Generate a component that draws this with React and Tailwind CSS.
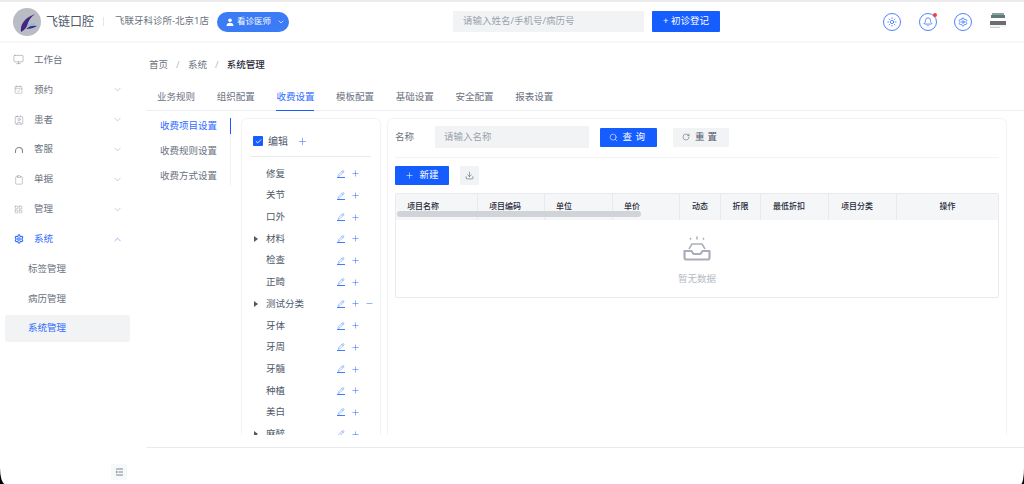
import { ChevronDown, ChevronUp, Plus, Minus, Search, RotateCw, Download, Check, Pencil, Sun, Bell, Settings, Monitor, CalendarCheck, Contact, Clipboard, LayoutGrid } from 'lucide-react';

// headset arc, lucide's one has ear cups the picture doesn't show
function HeadsetArc(props) {
  return (
    <svg width="10" height="10" viewBox="0 0 10 10" fill="none" stroke="currentColor" strokeWidth="1" {...props}>
      <path d="M1.500 8V6a3.500 3.500 0 0 1 7 0v2" />
    </svg>
  );
}

const menu = [
  { label: '工作台', icon: Monitor, size: 11 },
  { label: '预约', icon: CalendarCheck, size: 9, arrow: true },
  { label: '患者', icon: Contact, size: 10, arrow: true },
  { label: '客服', icon: HeadsetArc, size: 10, arrow: true },
  { label: '单据', icon: Clipboard, size: 10, arrow: true },
  { label: '管理', icon: LayoutGrid, size: 9, arrow: true },
];

const tabs = ['业务规则', '组织配置', '收费设置', '模板配置', '基础设置', '安全配置', '报表设置'];

const tree = [
  { name: '修复' },
  { name: '关节' },
  { name: '口外' },
  { name: '材料', caret: true },
  { name: '检查' },
  { name: '正畸' },
  { name: '测试分类', caret: true, minus: true },
  { name: '牙体' },
  { name: '牙周' },
  { name: '牙髓' },
  { name: '种植' },
  { name: '美白' },
  { name: '麻醉', caret: true },
];

const columns = [
  { label: '项目名称', w: 'w-[82px]', cls: 'pl-[11px]' },
  { label: '项目编码', w: 'w-[67px]', cls: 'pl-[11px]' },
  { label: '单位', w: 'w-[68px]', cls: 'pl-[11px]' },
  { label: '单价', w: 'w-[67px]', cls: 'pl-[11px]' },
  { label: '动态', w: 'w-[41px]', cls: 'justify-center' },
  { label: '折限', w: 'w-[40px]', cls: 'justify-center' },
  { label: '最低折扣', w: 'w-[68px]', cls: 'pl-[12px]' },
  { label: '项目分类', w: 'w-[68px]', cls: 'pl-[12px]' },
  { label: '操作', w: 'flex-1', cls: 'justify-center' },
];

function CircleIcon({ icon: Icon, dot }) {
  return (
    <div className="relative flex h-[18px] w-[18px] items-center justify-center rounded-full border border-[#4f82ff] text-[#2f6bff]">
      <Icon size={10} strokeWidth={1.8} />
      {dot && <span className="absolute -right-[1px] -top-[1px] h-[4px] w-[4px] rounded-full bg-[#f53f3f]" />}
    </div>
  );
}

function Logo() {
  return (
    <svg width="28" height="28" viewBox="0 0 28 28">
      <circle cx="14" cy="14" r="14" fill="#b9bcc4" />
      <path d="M8 24c-1-7 3-14 14-18-4 3-6 6-7 9-1 4-3 7-7 9z" fill="#43287f" />
      <path d="M13 21c3-3 7-4 11-3-3 2-7 3-11 3z" fill="#43287f" />
      <path d="M14 18c2-2 5-3 9-3-2 2-5 3-9 3z" fill="#7cc0e0" />
    </svg>
  );
}

function Avatar() {
  return (
    <div className="flex h-[18px] w-[16px] flex-col">
      <div className="mx-[2px] h-[2px] bg-[#8aa09e]" />
      <div className="mx-[1px] h-[3px] bg-[#5f7b78]" />
      <div className="h-[3px] bg-white" />
      <div className="h-[4px] bg-[#6a6e73]" />
      <div className="h-[2px] bg-[#f3f4f4]" />
      <div className="mr-[6px] h-[1px] bg-[#c9ccd0]" />
    </div>
  );
}

function TreeRow({ item }) {
  return (
    <div className="flex h-[21.7px] shrink-0 items-center text-[9.5px] text-[#4e5969]">
      <span className="flex w-[14px] shrink-0 justify-center">
        {item.caret && <span className="h-0 w-0 border-y-[3px] border-l-[4px] border-y-transparent border-l-[#4e5969]" />}
      </span>
      <span className="ml-[3px] w-[71px] shrink-0">{item.name}</span>
      <span className="flex shrink-0 items-center gap-[5.5px] text-[#3f7bff]">
        <Pencil size={8} strokeWidth={1.6} className="border-b border-[#3f7bff]" />
        <Plus size={9} strokeWidth={1.6} />
        {item.minus && <Minus size={9} strokeWidth={1.5} />}
      </span>
    </div>
  );
}

export default function App() {
  return (
    <div className="h-[484px] w-[1024px] overflow-hidden bg-black">
      <div
        className="flex h-[484px] w-[1024px] flex-col overflow-hidden rounded-bl-[5px_16px] rounded-br-[3px_16px] bg-white"
        style={{ fontFamily: '"Noto Sans", "Noto Sans CJK SC", sans-serif' }}
      >
        <header className="flex h-[43px] shrink-0 items-center border-y-2 border-t-[#ebebeb] border-b-[#f7f7f8] pl-[13px]">
          <Logo />
          <span className="ml-[5px] text-[12px] text-[#4e5969]">飞链口腔</span>
          <span className="ml-[9px] h-[9px] w-px bg-[#e5e6eb]" />
          <span className="ml-[11px] w-[93px] shrink-0 whitespace-nowrap text-[9.5px] text-[#6b7280]">飞联牙科诊所-北京1店</span>
          <button className="ml-[9px] flex h-[20px] w-[72px] shrink-0 items-center rounded-full bg-[#3b7cf6] pl-[9px] text-[8.5px] text-white">
            <svg width="8" height="8" viewBox="0 0 8 8" fill="currentColor">
              <circle cx="4" cy="2.200" r="1.800" />
              <path d="M0.500 8c0-2.500 1.500-3.200 3.500-3.200S7.500 5.500 7.500 8z" />
            </svg>
            <span className="ml-[3px]">看诊医师</span>
            <ChevronDown size={8} className="ml-[6px]" />
          </button>
          <div className="ml-[164px] flex h-[21px] w-[191px] shrink-0 items-center rounded-[1px] bg-[#f2f3f5] pl-[10px] text-[9.5px] text-[#9ca3af]">
            请输入姓名/手机号/病历号
          </div>
          <button className="ml-[8px] flex h-[21px] w-[68px] shrink-0 items-center justify-center rounded-[1px] bg-[#165dff] text-[9.5px] text-white">
            + 初诊登记
          </button>
          <div className="ml-[163px] flex items-center gap-[17.5px]">
            <CircleIcon icon={Sun} />
            <CircleIcon icon={Bell} dot />
            <CircleIcon icon={Settings} />
          </div>
          <div className="ml-[18px]">
            <Avatar />
          </div>
        </header>

        <div className="flex min-h-0 flex-1">
          <aside className="flex w-[146px] shrink-0 flex-col pl-[5px] pt-[2px]">
            {menu.map((m) => (
              <div key={m.label} className="flex h-[29.9px] w-[125px] shrink-0 items-center text-[9.5px] text-[#6b7280]">
                <span className="flex w-[19px] shrink-0 justify-end">
                  <span className="flex w-[11px] justify-center text-[#7f8794]">
                    <m.icon size={m.size} strokeWidth={1.1} />
                  </span>
                </span>
                <span className="ml-[10px]">{m.label}</span>
                {m.arrow && <ChevronDown size={11} strokeWidth={1} className="ml-auto mr-[7px] text-[#8f96a3]" />}
              </div>
            ))}
            <div className="flex h-[29.9px] w-[125px] shrink-0 items-center pl-[8px] text-[9.5px] text-[#2f6bff]">
              <Settings size={10} strokeWidth={2.6} className="ml-px" />
              <span className="ml-[10px]">系统</span>
              <ChevronUp size={11} strokeWidth={1.1} className="ml-auto mr-[7px]" />
            </div>
            <div className="flex h-[29.9px] w-[125px] shrink-0 items-center pl-[23px] text-[9.5px] text-[#6b7280]">标签管理</div>
            <div className="flex h-[29.9px] w-[125px] shrink-0 items-center pl-[23px] text-[9.5px] text-[#6b7280]">病历管理</div>
            <div className="mt-[1px] flex h-[27px] w-[125px] shrink-0 items-center rounded-[2px] bg-[#f2f3f5] pl-[23px] text-[9.5px] text-[#2f6bff]">系统管理</div>
            <div className="mt-auto mb-[4px] ml-[106px] flex h-[16px] w-[16px] items-center justify-center bg-[#f7f8fa] text-[#7b8494]">
              <svg width="9" height="8" viewBox="0 0 9 8" stroke="currentColor" strokeWidth="1" fill="none">
                <path d="M1 1h7M3.500 4H8M1 7h7M1 3l1.500 1L1 5" />
              </svg>
            </div>
          </aside>

          <main className="flex min-w-0 flex-1 flex-col">
            <div className="flex h-[43px] shrink-0 items-center pl-[3px] pt-[1px] text-[9.5px] text-[#6b7280]">
              <span>首页</span>
              <span className="mx-[8px] text-[#b6bbc4]">/</span>
              <span className="ml-[0.5px]">系统</span>
              <span className="mx-[8px] text-[#b6bbc4]">/</span>
              <span className="font-medium text-[#1f2937]">系统管理</span>
            </div>

            <div className="flex h-[25px] shrink-0 items-start gap-[21.7px] border-b border-[#eceef1] pl-[11px] pt-[4px] text-[9.5px] text-[#6b7280]">
              {tabs.map((t) => (
                <span key={t} className={t === '收费设置' ? 'h-[21px] border-b border-[#165dff] text-[#2f6bff]' : ''}>
                  {t}
                </span>
              ))}
            </div>

            <div className="flex h-[324px] shrink-0 pt-[7px]">
              <div className="flex h-[67px] w-[85px] shrink-0 flex-col border-r border-[#eef0f3] pl-[14px] text-[9.5px] text-[#6b7280]">
                <div className="relative flex h-[16px] items-center text-[#2f6bff]">
                  收费项目设置
                  <span className="absolute -right-px top-0 h-[16px] w-[1px] bg-[#165dff]" />
                </div>
                <div className="mt-[9px] flex h-[16px] items-center">收费规则设置</div>
                <div className="mt-[9px] flex h-[16px] items-center">收费方式设置</div>
              </div>

              <div className="ml-[10px] flex w-[140px] shrink-0 flex-col overflow-hidden rounded-t-[6px] border-x border-t border-[#f2f3f5] px-[9px]">
                <div className="flex h-[38px] shrink-0 items-center border-b border-[#e8eaee] pl-[2px] pt-[7px] text-[10px] text-[#4e5969]">
                  <span className="flex h-[10px] w-[10px] items-center justify-center rounded-[1px] bg-[#165dff] text-white">
                    <Check size={7} strokeWidth={3} />
                  </span>
                  <span className="ml-[5px]">编辑</span>
                  <Plus size={11} strokeWidth={1.3} className="ml-[9px] text-[#3f7bff]" />
                </div>
                <div className="-ml-[2px] flex flex-col pt-[6px]">
                  {tree.map((item) => (
                    <TreeRow key={item.name} item={item} />
                  ))}
                </div>
              </div>

              <div className="ml-[6px] flex w-[620px] shrink-0 flex-col rounded-t-[6px] border-x border-t border-[#f2f3f5] px-[7px]">
                <div className="flex h-[39px] shrink-0 items-center border-b border-[#f2f3f5] pb-[2px] text-[9.5px]">
                  <span className="text-[#6b7280]">名称</span>
                  <div className="ml-[21px] flex h-[22px] w-[154px] items-center rounded-[1px] bg-[#f2f3f5] pl-[9px] text-[#9ca3af]">请输入名称</div>
                  <button className="ml-[11px] flex h-[19px] w-[57px] items-center justify-center gap-[5px] rounded-[1px] bg-[#165dff] text-white">
                    <Search size={9} strokeWidth={1.5} />
                    <span className="tracking-[3.500px]">查询</span>
                  </button>
                  <button className="ml-[16px] flex h-[19px] w-[56px] items-center justify-center gap-[5px] rounded-[1px] bg-[#f2f3f5] text-[#4e5969]">
                    <RotateCw size={8} strokeWidth={1.5} />
                    <span className="tracking-[3px]">重置</span>
                  </button>
                </div>
                <div className="flex h-[35px] shrink-0 items-center text-[9.5px]">
                  <button className="flex h-[19px] w-[54px] items-center justify-center gap-[5px] rounded-[1px] bg-[#165dff] text-white">
                    <Plus size={9} strokeWidth={1.5} />
                    新建
                  </button>
                  <button className="ml-[11px] flex h-[19px] w-[19px] items-center justify-center rounded-[1px] bg-[#f2f3f5] text-[#4e5969]">
                    <Download size={9} strokeWidth={1.5} />
                  </button>
                </div>
                <div className="relative flex h-[105px] w-[604px] flex-col rounded-[2px] border border-[#e8eaee]">
                  <div className="flex h-[26px] shrink-0 bg-[#f5f6f8] text-[8px] font-medium text-[#1f2937]">
                    {columns.map((c) => (
                      <div key={c.label} className={`flex items-center border-r border-[#e8eaee] pb-[3px] last:border-r-0 ${c.w} ${c.cls}`}>
                        {c.label}
                      </div>
                    ))}
                  </div>
                  <div className="absolute left-[1px] top-[17px] h-[6px] w-[244px] rounded-full bg-[#d0d3d8]" />
                  <div className="flex flex-1 flex-col items-center pt-[16px]">
                    <svg width="28" height="25" viewBox="0 0 28 25" fill="none" stroke="#a9aeb8" strokeWidth="2.200" strokeLinejoin="round">
                      <path d="M6 13l3-5h10l3 5" strokeWidth="1.500" />
                      <path d="M1.500 15h7l2 3h7l2-3h7v6.500a2 2 0 0 1-2 2h-21a2 2 0 0 1-2-2z" />
                      <path d="M7 2l1 1.500M14 0.500v3M21 2l-1 1.500" strokeWidth="1.500" />
                    </svg>
                    <span className="mt-[11px] text-[9.5px] text-[#b6bbc4]">暂无数据</span>
                  </div>
                </div>
              </div>
            </div>

            <div className="mt-[12px] h-px shrink-0 bg-[#e8eaee]" />
          </main>
        </div>
      </div>
    </div>
  );
}
